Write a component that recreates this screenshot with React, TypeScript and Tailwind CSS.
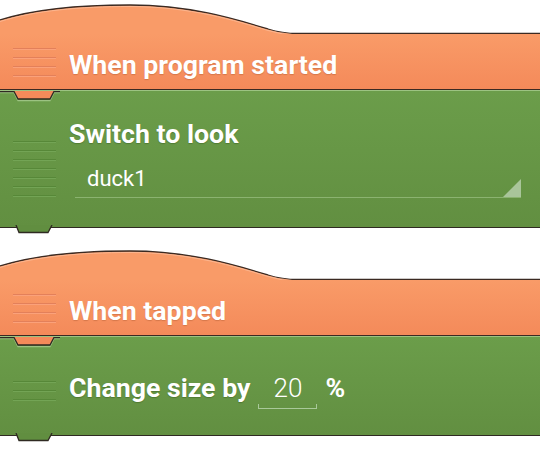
import React from "react";

const font = { fontFamily: "Roboto, 'Noto Sans', sans-serif" };

const Lines = ({ count, tone }: { count: number; tone: "orange" | "green" }) => (
  <div className="flex flex-col gap-[7px] w-[43px]">
    {Array.from({ length: count }).map((_, i) => (
      <div
        key={i}
        className={
          tone === "orange"
            ? "h-[2px] border-t border-[#e3805a] border-b border-b-[#fba17a]"
            : "h-[2px] border-t border-[#578838] border-b border-b-[#73a455]"
        }
      />
    ))}
  </div>
);

const HatTop = () => (
  <svg width="540" height="34" viewBox="0 0 540 34" className="block">
    <path
      d="M0 20 C 35 9, 80 5, 130 5 C 190 5, 235 19, 268 29 Q 282 33.5, 298 33.5 L 540 33.5 L 540 34 L 0 34 Z"
      fill="#f99b68"
    />
    <path
      d="M0 20 C 35 9, 80 5, 130 5 C 190 5, 235 19, 268 29 Q 282 33.5, 298 33.5 L 540 33.5"
      fill="none"
      stroke="#3b2a22"
      strokeWidth="1.3"
    />
    <path
      d="M0 21.5 C 35 10.5, 80 6.5, 130 6.5 C 190 6.5, 235 20.5, 268 30.5 Q 282 35, 298 35 L 540 35"
      fill="none"
      stroke="#fcb690"
      strokeWidth="1"
    />
  </svg>
);

// orange tab that sits in the top of a green block
const TopNotch = () => (
  <svg width="60" height="12" viewBox="0 0 60 12" className="absolute left-0 top-0">
    <path d="M0 0.5 L14 0.5 L18 8.5 L50 8.5 L54 0.5 L60 0.5" fill="none" stroke="#9cc382" strokeWidth="1.2" transform="translate(0 1.2)" />
    <path d="M14 0 L18 8 L50 8 L54 0 Z" fill="#f48a5a" />
    <path d="M0 0.5 L14 0.5 L18 8 L50 8 L54 0.5 L60 0.5" fill="none" stroke="#2f2a22" strokeWidth="1.3" />
  </svg>
);

// green tab hanging under a green block
const BottomTab = () => (
  <svg width="60" height="10" viewBox="0 0 60 10" className="absolute left-0 -bottom-[8px]">
    <path d="M16 0 L19 7.5 L48 7.5 L52 0 Z" fill="#618e40" />
    <path d="M16 0 L19 7.5 L48 7.5 L52 0" fill="none" stroke="#2f2a22" strokeWidth="1.3" />
  </svg>
);

const Hat = ({ label }: { label: string }) => (
  <div>
    <HatTop />
    <div className="h-[56px] bg-gradient-to-b from-[#f99b68] to-[#f48a5a] border-b border-[#3b2a22] flex items-start pt-[14px] pl-[13px]">
      <Lines count={4} tone="orange" />
      <div
        className="ml-[13px] mt-[1px] text-[26.7px] leading-[32px] font-bold text-white [text-shadow:0_1px_1px_rgba(120,50,20,0.25)]"
        style={font}
      >
        {label}
      </div>
    </div>
  </div>
);

const Green = ({ children, h }: { children: React.ReactNode; h: string }) => (
  <div className={`relative ${h} bg-gradient-to-b from-[#6b9d4a] to-[#628f41] border-t border-[#9cc382] border-b border-b-[#2f2a22]`}>
    <TopNotch />
    {children}
    <BottomTab />
  </div>
);

export default function App() {
  return (
    <div className="w-[540px] h-[449px] bg-white overflow-hidden" style={font}>
      <Hat label="When program started" />
      <Green h="h-[138px]">
        <div className="flex items-start pl-[13px] pt-[50px]">
          <Lines count={7} tone="green" />
        </div>
        <div className="absolute left-0 right-0 top-0 pl-[69px] pt-[27px]">
          <div className="text-[26.7px] leading-[32px] font-bold text-white [text-shadow:0_1px_1px_rgba(30,60,10,0.3)]">
            Switch to look
          </div>
          <div className="relative ml-[6px] mr-[19px] mt-[16px] h-[32px] border-b border-[#8bb370] pl-[12px]">
            <div className="text-[22px] leading-[26px] text-white">duck1</div>
            <div className="absolute right-0 bottom-0 w-0 h-0 border-l-[18px] border-l-transparent border-b-[18px] border-b-[#a9c59a]" />
          </div>
        </div>
      </Green>
      <div className="h-[18px]" />
      <Hat label="When tapped" />
      <Green h="h-[100px]">
        <div className="flex items-start pl-[13px] pt-[44px]">
          <Lines count={3} tone="green" />
          <div className="ml-[13px] -mt-[9px] flex items-start">
            <div className="text-[26.7px] leading-[32px] font-bold text-white [text-shadow:0_1px_1px_rgba(30,60,10,0.3)]">
              Change size by
            </div>
            <div className="ml-[8px] w-[59px] h-[37px] relative">
              <div className="text-center text-[26px] leading-[32px] font-light text-white">20</div>
              <div className="absolute left-0 right-0 bottom-0 h-[5px] border-b border-x border-[#a9c99a]" />
            </div>
            <div className="ml-[8px] text-[26.7px] leading-[32px] font-bold text-white">%</div>
          </div>
        </div>
      </Green>
    </div>
  );
}
